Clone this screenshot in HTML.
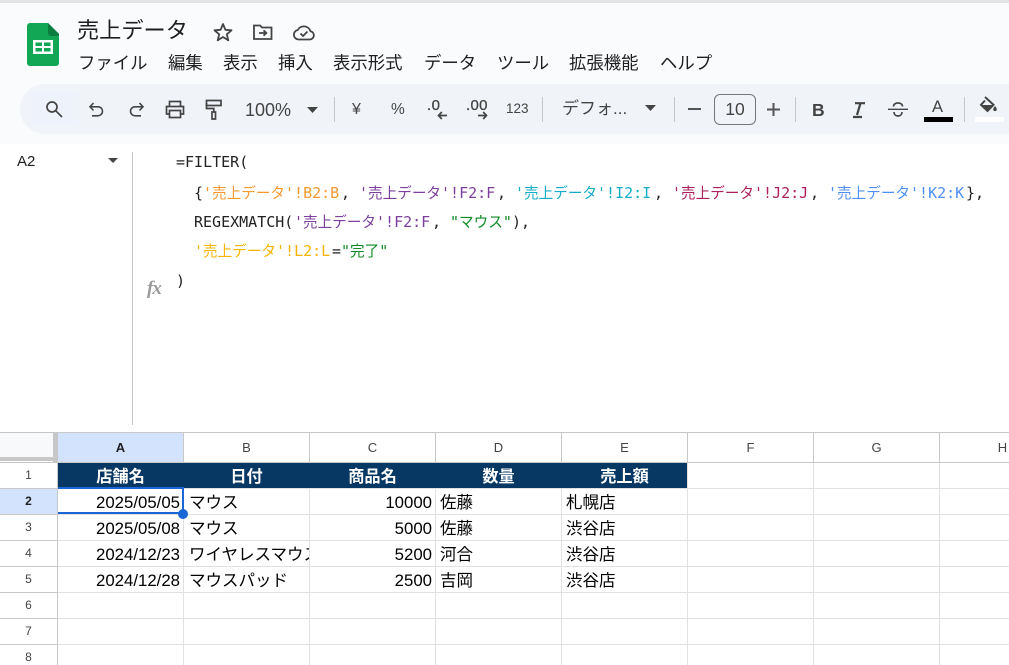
<!DOCTYPE html>
<html lang="ja"><head><meta charset="utf-8"><title>売上データ</title>
<style>
html,body{margin:0;padding:0;width:1009px;height:665px;overflow:hidden;background:#fff}
body{position:relative;font-family:"Liberation Sans","Noto Sans CJK JP",sans-serif;color:#000}
.a{position:absolute;white-space:nowrap}
.m{position:absolute;top:53px;font-size:17.4px;line-height:20px;color:#1f1f1f;white-space:nowrap}
.f{position:absolute;font-family:"DejaVu Sans Mono","Noto Sans CJK JP",monospace;font-size:15px;line-height:18px;color:#222;white-space:nowrap}
.f b{font-family:"Noto Sans CJK JP",sans-serif;font-weight:400;font-size:14.6px}
.ch{position:absolute;top:433px;height:29px;line-height:29px;width:125px;text-align:center;font-size:13px;color:#444}
.rh{position:absolute;left:0;width:57px;text-align:center;font-size:12px;color:#444;height:25px;line-height:25px}
.h{position:absolute;top:463px;height:25px;line-height:28px;width:125px;text-align:center;font-size:16.2px;font-weight:bold;color:#fff}
.c{position:absolute;font-size:16.5px;height:25px;line-height:28px;white-space:nowrap;overflow:hidden}
.r{text-align:right;font-size:16.8px}
.v{position:absolute;width:1px}
.l{position:absolute;height:1px}
.sep{position:absolute;top:97px;width:1px;height:25px;background:#c7c7c7}
.t{position:absolute;color:#444;white-space:nowrap}
svg{position:absolute;overflow:visible}
</style></head><body>
<div class="a" style="left:0;top:0;width:1009px;height:144px;background:#f9fbfd"></div>
<div class="a" style="left:0;top:0;width:1009px;height:3px;background:#e3e3e3"></div>

<!-- logo -->
<svg style="left:27px;top:23px" width="32" height="43" viewBox="0 0 32 43">
<path d="M3 0H21L32 11V40a3 3 0 0 1-3 3H3a3 3 0 0 1-3-3V3a3 3 0 0 1 3-3z" fill="#11a755"/>
<path d="M21 0L32 11V13H24a3 3 0 0 1-3-3z" fill="#0a7d3e"/>
<path d="M6 17H26V31H6zM8.500 19.500V23H15V19.500zM17 19.500V23H23.500V19.500zM8.500 25V28.500H15V25zM17 25V28.500H23.500V25z" fill="#fff" fill-rule="evenodd"/>
</svg>

<div class="a" style="left:77px;top:17px;font-size:22.2px;line-height:28px;color:#1f1f1f">売上データ</div>

<svg style="left:212px;top:21px" width="22" height="22" viewBox="0 0 22 22" fill="none" stroke="#444" stroke-width="1.800" stroke-linejoin="round"><path d="M11 3l2.400 5.800 6.100.5-4.700 4 1.500 6L11 16l-5.300 3.300 1.500-6-4.700-4 6.100-.5z"/></svg>
<svg style="left:252px;top:23px" width="22" height="18" viewBox="0 0 22 18" fill="none" stroke="#444" stroke-width="1.800"><path d="M2 2.500h6l2 2h9.500v11.500H2z"/><path d="M7 10h7M11.500 7.300l2.800 2.700-2.800 2.700"/></svg>
<svg style="left:292px;top:22px" width="24" height="20" viewBox="0 0 24 20" fill="none" stroke="#444" stroke-width="1.800"><path d="M6.500 17.500a4.800 4.800 0 0 1-.8-9.500 7 7 0 0 1 12.800 1.200 4.200 4.200 0 0 1-.5 8.300z"/><path d="M8.500 11.500l2.500 2.500 4.500-4.500"/></svg>

<div class="m" style="left:78px">ファイル</div>
<div class="m" style="left:168px">編集</div>
<div class="m" style="left:223px">表示</div>
<div class="m" style="left:278px">挿入</div>
<div class="m" style="left:333px">表示形式</div>
<div class="m" style="left:424px">データ</div>
<div class="m" style="left:497px">ツール</div>
<div class="m" style="left:569px">拡張機能</div>
<div class="m" style="left:660px">ヘルプ</div>

<!-- toolbar -->
<div class="a" style="left:20px;top:84px;width:1009px;height:50px;background:#f0f4f9;border-radius:25px"></div>
<div class="a" style="left:31px;top:92px;width:48px;height:34px;background:#edf2fb;border-radius:3px"></div>

<svg style="left:45px;top:100px" width="18" height="18" viewBox="0 0 18 18" fill="none" stroke="#444" stroke-width="1.700"><circle cx="7" cy="7" r="5"/><path d="M10.700 10.700l6.300 6.300"/></svg>
<svg style="left:88px;top:102px" width="18" height="16" viewBox="0 0 18 16" fill="none" stroke="#444" stroke-width="1.600"><path d="M5.500 1L2 4.800l3.500 3.700"/><path d="M2.500 4.800H10a4.500 4.500 0 0 1 0 9H4"/></svg>
<svg style="left:127px;top:102px" width="18" height="16" viewBox="0 0 18 16" fill="none" stroke="#444" stroke-width="1.600"><path d="M12.500 1L16 4.800l-3.500 3.700"/><path d="M15.500 4.800H8a4.500 4.500 0 0 0 0 9h6"/></svg>
<svg style="left:165px;top:100px" width="20" height="19" viewBox="0 0 20 19" fill="none" stroke="#444" stroke-width="1.700"><path d="M4.500 6V1.500h11V6"/><path d="M4.500 14H1.500V6.500h17V14h-3"/><path d="M4.500 10.500h11v7h-11z"/></svg>
<svg style="left:205px;top:99px" width="18" height="21" viewBox="0 0 18 21" fill="none" stroke="#444" stroke-width="1.700"><path d="M1.500 1.500h14.500v5H1.500z"/><path d="M1.500 4v5.500h7.300V13"/><path d="M7 13h3.500v7H7z"/></svg>

<div class="t" style="left:245px;top:99px;font-size:18px;line-height:22px">100%</div>
<svg style="left:307px;top:107px" width="11" height="6"><path d="M0 0h11L5.500 6z" fill="#444"/></svg>
<div class="sep" style="left:334px"></div>

<div class="t" style="left:352px;top:101px;font-size:16px;line-height:18px">¥</div>
<div class="t" style="left:391px;top:101px;font-size:15.500px;line-height:18px">%</div>
<div class="t" style="left:427px;top:97px;font-size:15px;line-height:18px;-webkit-text-stroke:.3px #444;letter-spacing:.5px">.0</div>
<svg style="left:437px;top:111px" width="11" height="9" viewBox="0 0 11 9" fill="none" stroke="#444" stroke-width="1.700"><path d="M10 4.500H1.500M4.800 1L1.500 4.500 4.800 8"/></svg>
<div class="t" style="left:466px;top:97px;font-size:15px;line-height:18px;-webkit-text-stroke:.3px #444;letter-spacing:.3px">.00</div>
<svg style="left:477px;top:111px" width="11" height="9" viewBox="0 0 11 9" fill="none" stroke="#444" stroke-width="1.700"><path d="M1 4.500h8.500M6.200 1l3.300 3.500L6.200 8"/></svg>
<div class="t" style="left:506px;top:100px;font-size:13.500px;line-height:18px">123</div>
<div class="sep" style="left:542px"></div>

<div class="t" style="left:562px;top:98px;font-size:17px;line-height:22px">デフォ...</div>
<svg style="left:645px;top:105px" width="11" height="6"><path d="M0 0h11L5.500 6z" fill="#444"/></svg>
<div class="sep" style="left:674px"></div>

<div class="a" style="left:688px;top:108px;width:13px;height:2px;background:#555"></div>
<div class="a" style="left:714px;top:94px;width:40px;height:29px;border:1px solid #747775;border-radius:6px;text-align:center;font-size:17.500px;line-height:29px;color:#444">10</div>
<svg style="left:767px;top:103px" width="13" height="13"><path d="M6.500 0v13M0 6.500h13" stroke="#555" stroke-width="2"/></svg>
<div class="sep" style="left:795px"></div>

<div class="t" style="left:812px;top:99px;font-size:17.500px;line-height:22px;font-weight:bold">B</div>
<svg style="left:852px;top:102px" width="14" height="16" viewBox="0 0 14 16" fill="none" stroke="#444" stroke-width="2.200"><path d="M3 1.200h10M8.500 1.200L5 13M1 15h9"/></svg>
<svg style="left:888px;top:102px" width="20" height="15" viewBox="0 0 20 15" fill="none" stroke="#444" stroke-width="1.700"><path d="M0 7.300h20" stroke-width="1.400"/><path d="M5.500 4.500C5.500 2.200 7.500 1 10 1s4.500 1.200 4.500 3.500M6 10c0 2.500 1.800 4 4 4s4-1.500 4-4"/></svg>
<div class="t" style="left:932px;top:96px;font-size:16.500px;line-height:22px">A</div>
<div class="a" style="left:924px;top:117px;width:29px;height:5px;background:#000"></div>
<div class="sep" style="left:964px"></div>
<svg style="left:980px;top:96px" width="18" height="17" viewBox="0 0 18 17"><path d="M5 1L13.500 8.800 7.500 15 1 8.800 5 4.500" fill="none" stroke="#444" stroke-width="2"/><path d="M1.500 9h11l-5 5.500z" fill="#444"/><path d="M15 10c1.300 1.800 1.800 2.500 1.800 3.300a1.800 1.800 0 0 1-3.600 0c0-.8.500-1.500 1.800-3.300z" fill="#444"/></svg>
<div class="a" style="left:975px;top:117px;width:29px;height:5px;background:#fff"></div>

<!-- formula bar -->
<div class="a" style="left:17px;top:153px;font-size:15px;line-height:18px;color:#1f1f1f">A2</div>
<svg style="left:108px;top:158px" width="10" height="5"><path d="M0 0h10L5 5z" fill="#444"/></svg>
<div class="a" style="left:132px;top:152px;width:1px;height:273px;background:#c7c7c7"></div>
<div class="a" style="left:147px;top:277px;font-family:'Liberation Serif',serif;font-style:italic;font-weight:bold;font-size:19px;line-height:24px;color:#9a9a9a;letter-spacing:-1px">fx</div>

<div class="f" style="left:176px;top:153px">=FILTER(</div>
<div class="f" style="left:194px;top:184px">{</div>
<div class="f" style="left:203px;top:184px;color:#f5992f">'<b>売上データ</b>'!B2:B</div>
<div class="f" style="left:341px;top:184px">,</div>
<div class="f" style="left:359px;top:184px;color:#7c3f9e">'<b>売上データ</b>'!F2:F</div>
<div class="f" style="left:497px;top:184px">,</div>
<div class="f" style="left:515px;top:184px;color:#12acc9">'<b>売上データ</b>'!I2:I</div>
<div class="f" style="left:654px;top:184px">,</div>
<div class="f" style="left:672px;top:184px;color:#ad1f5c">'<b>売上データ</b>'!J2:J</div>
<div class="f" style="left:810px;top:184px">,</div>
<div class="f" style="left:828px;top:184px;color:#4d8ff5">'<b>売上データ</b>'!K2:K</div>
<div class="f" style="left:966px;top:184px">},</div>
<div class="f" style="left:194px;top:213px">REGEXMATCH(</div>
<div class="f" style="left:294px;top:213px;color:#7c3f9e">'<b>売上データ</b>'!F2:F</div>
<div class="f" style="left:432px;top:213px">,</div>
<div class="f" style="left:450px;top:213px;color:#0f8a24">"<b>マウス</b>"</div>
<div class="f" style="left:512px;top:213px">),</div>
<div class="f" style="left:194px;top:242px;color:#f5b400">'<b>売上データ</b>'!L2:L</div>
<div class="f" style="left:332px;top:242px">=</div>
<div class="f" style="left:341px;top:242px;color:#0f8a24">"<b>完了</b>"</div>
<div class="f" style="left:176px;top:272px">)</div>

<!-- grid -->
<div class="a" style="left:0;top:432px;width:1009px;height:1px;background:#c7c7c7"></div>
<div class="a" style="left:0;top:433px;width:53px;height:24px;background:#f8f9fa;border-right:4px solid #c7c7c7;border-bottom:4px solid #c7c7c7"></div>
<div class="a" style="left:53px;top:461px;width:4px;height:1px;background:#c7c7c7"></div>
<div class="a" style="left:58px;top:433px;width:125px;height:29px;background:#d3e3fd"></div>
<div class="a" style="left:0;top:488px;width:57px;height:26px;background:#d3e3fd"></div>

<div class="h" style="left:58px;width:630px;background:#073763"></div>

<div class="l" style="left:0;top:462px;width:1009px;background:#c7c7c7"></div>
<div class="l" style="left:0;top:488px;width:57px;background:#c7c7c7"></div>
<div class="l" style="left:0;top:514px;width:57px;background:#c7c7c7"></div>
<div class="l" style="left:0;top:540px;width:57px;background:#c7c7c7"></div>
<div class="l" style="left:0;top:566px;width:57px;background:#c7c7c7"></div>
<div class="l" style="left:0;top:592px;width:57px;background:#c7c7c7"></div>
<div class="l" style="left:0;top:618px;width:57px;background:#c7c7c7"></div>
<div class="l" style="left:0;top:644px;width:57px;background:#c7c7c7"></div>
<div class="l" style="left:57px;top:488px;width:952px;background:#e1e1e1"></div>
<div class="l" style="left:57px;top:514px;width:952px;background:#e1e1e1"></div>
<div class="l" style="left:57px;top:540px;width:952px;background:#e1e1e1"></div>
<div class="l" style="left:57px;top:566px;width:952px;background:#e1e1e1"></div>
<div class="l" style="left:57px;top:592px;width:952px;background:#e1e1e1"></div>
<div class="l" style="left:57px;top:618px;width:952px;background:#e1e1e1"></div>
<div class="l" style="left:57px;top:644px;width:952px;background:#e1e1e1"></div>

<div class="v" style="left:57px;top:433px;height:232px;background:#c7c7c7"></div>
<div class="v" style="left:183px;top:433px;height:29px;background:#c7c7c7"></div>
<div class="v" style="left:309px;top:433px;height:29px;background:#c7c7c7"></div>
<div class="v" style="left:435px;top:433px;height:29px;background:#c7c7c7"></div>
<div class="v" style="left:561px;top:433px;height:29px;background:#c7c7c7"></div>
<div class="v" style="left:687px;top:433px;height:29px;background:#c7c7c7"></div>
<div class="v" style="left:813px;top:433px;height:29px;background:#c7c7c7"></div>
<div class="v" style="left:939px;top:433px;height:29px;background:#c7c7c7"></div>
<div class="v" style="left:183px;top:488px;height:177px;background:#e1e1e1"></div>
<div class="v" style="left:309px;top:488px;height:177px;background:#e1e1e1"></div>
<div class="v" style="left:435px;top:488px;height:177px;background:#e1e1e1"></div>
<div class="v" style="left:561px;top:488px;height:177px;background:#e1e1e1"></div>
<div class="v" style="left:687px;top:463px;height:202px;background:#e1e1e1"></div>
<div class="v" style="left:813px;top:463px;height:202px;background:#e1e1e1"></div>
<div class="v" style="left:939px;top:463px;height:202px;background:#e1e1e1"></div>

<div class="ch" style="left:58px;font-weight:bold;color:#1f1f1f">A</div>
<div class="ch" style="left:184px">B</div>
<div class="ch" style="left:310px">C</div>
<div class="ch" style="left:436px">D</div>
<div class="ch" style="left:562px">E</div>
<div class="ch" style="left:688px">F</div>
<div class="ch" style="left:814px">G</div>
<div class="ch" style="left:940px">H</div>

<div class="rh" style="top:463px">1</div>
<div class="rh" style="top:489px;font-weight:bold;color:#1f1f1f">2</div>
<div class="rh" style="top:515px">3</div>
<div class="rh" style="top:541px">4</div>
<div class="rh" style="top:567px">5</div>
<div class="rh" style="top:593px">6</div>
<div class="rh" style="top:619px">7</div>
<div class="rh" style="top:645px">8</div>

<div class="h" style="left:58px">店舗名</div>
<div class="h" style="left:184px">日付</div>
<div class="h" style="left:310px">商品名</div>
<div class="h" style="left:436px">数量</div>
<div class="h" style="left:562px">売上額</div>

<div class="c r" style="left:58px;top:489px;width:122px">2025/05/05</div>
<div class="c" style="left:189px;top:489px;width:120px">マウス</div>
<div class="c r" style="left:310px;top:489px;width:122px">10000</div>
<div class="c" style="left:440px;top:489px;width:120px">佐藤</div>
<div class="c" style="left:566px;top:489px;width:120px">札幌店</div>

<div class="c r" style="left:58px;top:515px;width:122px">2025/05/08</div>
<div class="c" style="left:189px;top:515px;width:120px">マウス</div>
<div class="c r" style="left:310px;top:515px;width:122px">5000</div>
<div class="c" style="left:440px;top:515px;width:120px">佐藤</div>
<div class="c" style="left:566px;top:515px;width:120px">渋谷店</div>

<div class="c r" style="left:58px;top:541px;width:122px">2024/12/23</div>
<div class="c" style="left:189px;top:541px;width:120px">ワイヤレスマウス</div>
<div class="c r" style="left:310px;top:541px;width:122px">5200</div>
<div class="c" style="left:440px;top:541px;width:120px">河合</div>
<div class="c" style="left:566px;top:541px;width:120px">渋谷店</div>

<div class="c r" style="left:58px;top:567px;width:122px">2024/12/28</div>
<div class="c" style="left:189px;top:567px;width:120px">マウスパッド</div>
<div class="c r" style="left:310px;top:567px;width:122px">2500</div>
<div class="c" style="left:440px;top:567px;width:120px">吉岡</div>
<div class="c" style="left:566px;top:567px;width:120px">渋谷店</div>

<!-- selection -->
<div class="a" style="left:58px;top:487px;width:126px;height:2px;background:#1a66d6"></div>
<div class="a" style="left:58px;top:512px;width:126px;height:2px;background:#1a66d6"></div>
<div class="a" style="left:182px;top:487px;width:2px;height:26px;background:#1a66d6"></div>
<div class="a" style="left:178px;top:509px;width:10px;height:10px;border-radius:50%;background:#1a66d6"></div>
</body></html>
